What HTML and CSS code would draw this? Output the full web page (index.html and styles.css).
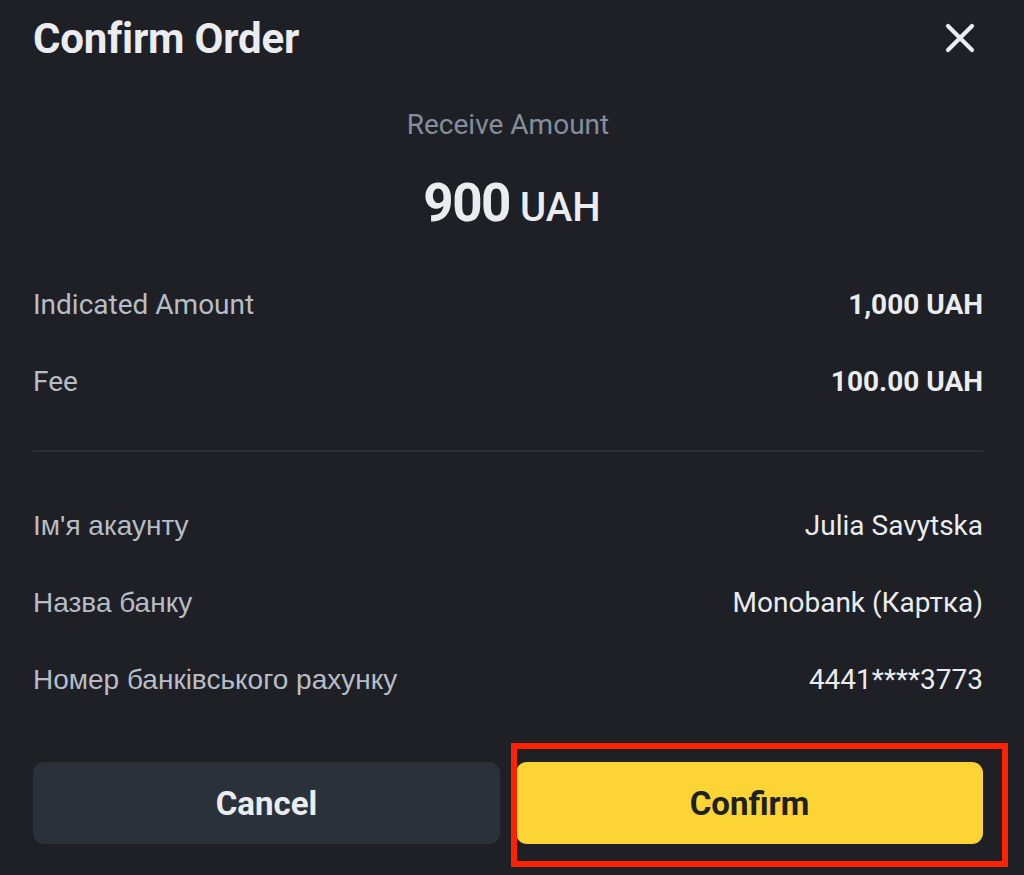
FILE: index.html
```html
<!DOCTYPE html>
<html lang="uk">
<head>
<meta charset="utf-8">
<title>Confirm Order</title>
<link rel="stylesheet" href="styles.css">
</head>
<body>
<div class="modal">
  <header class="head">
    <h1 class="title">Confirm Order</h1>
    <svg class="close" width="30" height="30" viewBox="0 0 30 30" aria-hidden="true">
      <path d="M3 3 L27 27 M27 3 L3 27" stroke="#eaecef" stroke-width="4.2" stroke-linecap="round" fill="none"/>
    </svg>
  </header>
  <div class="receive">
    <div class="receive-label">Receive Amount</div>
    <div class="receive-amount"><span class="num">900</span><span class="cur">UAH</span></div>
  </div>
  <div class="rows first">
    <div class="row"><span class="label">Indicated Amount</span><span class="value strong">1,000 UAH</span></div>
    <div class="row"><span class="label">Fee</span><span class="value strong">100.00 UAH</span></div>
  </div>
  <div class="divider"></div>
  <div class="rows">
    <div class="row"><span class="label cyr">Ім'я акаунту</span><span class="value">Julia Savytska</span></div>
    <div class="row"><span class="label cyr">Назва банку</span><span class="value">Monobank (Картка)</span></div>
    <div class="row"><span class="label cyr">Номер банківського рахунку</span><span class="value">4441****3773</span></div>
  </div>
  <div class="actions">
    <button class="btn cancel">Cancel</button>
    <div class="confirm-wrap">
      <button class="btn confirm">Confirm</button>
      <div class="highlight"></div>
    </div>
  </div>
</div>
</body>
</html>
```

FILE: styles.css
```css
html, body {
  margin: 0;
  padding: 0;
  background: #1e2026;
}
body {
  width: 1024px;
  height: 875px;
  overflow: hidden;
  font-family: Roboto, "Liberation Sans", sans-serif;
  color: #eaecef;
}
.modal {
  padding: 0 41px 0 33px;
}
.head {
  height: 76px;
  display: flex;
  align-items: center;
  justify-content: space-between;
}
.title {
  margin: 0;
  font-size: 42px;
  font-weight: 700;
  color: #eaecef;
  letter-spacing: -0.2px;
}
.close {
  margin-right: 8px;
  margin-top: -1px;
}
.receive {
  display: flex;
  flex-direction: column;
  align-items: center;
  padding-top: 32px;
}
.receive-label {
  height: 34px;
  line-height: 34px;
  font-size: 28px;
  color: #848e9c;
}
.receive-amount {
  margin-top: 31px;
  height: 60px;
  display: flex;
  align-items: baseline;
  gap: 10px;
  line-height: 60px;
  margin-left: 8px;
}
.num {
  font-size: 53px;
  font-weight: 700;
  letter-spacing: -1.5px;
}
.cur {
  font-size: 40px;
  font-weight: 500;
}
.rows.first {
  margin-top: 33px;
}
.row {
  height: 77px;
  display: flex;
  align-items: center;
  justify-content: space-between;
}
.label {
  font-size: 28px;
  color: #b7bdc6;
}
.label.cyr {
  font-family: "Liberation Sans", Arial, sans-serif;
}
.value {
  font-size: 28px;
  color: #eaecef;
}
.value.strong {
  font-weight: 700;
}
.divider {
  height: 2px;
  background: #2b3139;
  margin: 30px 0 35px;
}
.actions {
  margin-top: 44px;
  display: grid;
  grid-template-columns: 1fr 1fr;
  gap: 16px;
}
.btn {
  display: block;
  height: 82px;
  border: none;
  border-radius: 11px;
  font-family: Roboto, "Liberation Sans", sans-serif;
  font-size: 33px;
  font-weight: 700;
  width: 100%;
  padding: 0;
  cursor: pointer;
}
.cancel {
  background: #2b3139;
  color: #eaecef;
}
.confirm-wrap {
  position: relative;
}
.confirm {
  background: #fcd535;
  color: #1e2026;
}
.highlight {
  position: absolute;
  left: -5px;
  top: -19px;
  width: 485px;
  height: 112px;
  border: 6px solid #ff2200;
  pointer-events: none;
}
```
